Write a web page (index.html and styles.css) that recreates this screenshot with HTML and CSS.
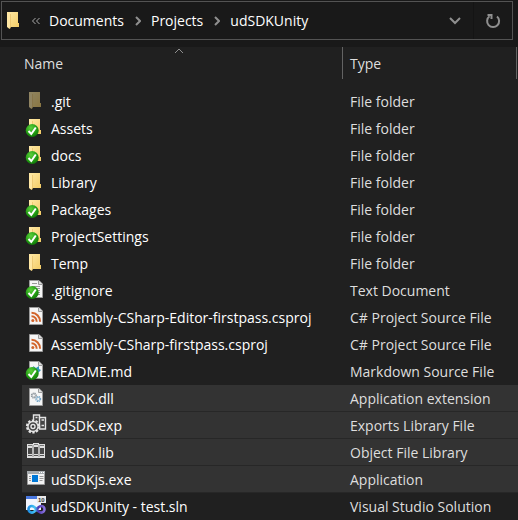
FILE: index.html
```html
<!DOCTYPE html>
<html lang="en">
<head>
<meta charset="utf-8">
<title>udSDKUnity</title>
<link rel="stylesheet" href="styles.css">
</head>
<body>
<svg class="defs" aria-hidden="true">
  <defs>
    <linearGradient id="gold" x1="0" y1="0" x2="1" y2="1"><stop offset="0" stop-color="#ffe9a6"/><stop offset="1" stop-color="#f3cc66"/></linearGradient>
    <radialGradient id="green" cx=".4" cy=".3" r=".8"><stop offset="0" stop-color="#5cd03c"/><stop offset=".6" stop-color="#219b12"/><stop offset="1" stop-color="#0b6a06"/></radialGradient>
    <linearGradient id="loop" x1="0" y1="0" x2="1" y2="0"><stop offset="0" stop-color="#1f8fe4"/><stop offset=".4" stop-color="#45c6f5"/><stop offset=".6" stop-color="#4b35b0"/><stop offset="1" stop-color="#8a72de"/></linearGradient>
    <symbol id="folder" viewBox="0 0 24 24">
      <path d="M4 3h11v11h1v4H4z" fill="url(#gold)"/>
      <path d="M4 3.500l3.500 1.500V18.500L6.500 20 4 18z" fill="#ffe7a3"/>
      <path d="M7.500 5v13l-1 2" fill="none" stroke="#e3b75a" stroke-width=".6"/>
    </symbol>
    <symbol id="check" viewBox="0 0 24 24">
      <circle cx="7.200" cy="14.500" r="6.500" fill="url(#green)"/>
      <path d="M3.500 15l2.800 3 4.500-6.500" fill="none" stroke="#fff" stroke-width="2"/>
    </symbol>
    <symbol id="page" viewBox="0 0 24 24">
      <path d="M4.500 2.500h9.500l3.500 3.500v13.500h-13z" fill="#f5f5f5" stroke="#9b9b9b"/>
      <path d="M13.500 2.500v4h4" fill="#ddd" stroke="#9b9b9b"/>
    </symbol>
    <symbol id="text" viewBox="0 0 24 24">
      <use href="#page"/>
      <path d="M7 5.500h5M7 8.500h8M7 10.500h8M7 12.500h8M7 14.500h8M7 16.500h8" stroke="#999"/>
    </symbol>
    <symbol id="feed" viewBox="0 0 24 24">
      <use href="#page"/>
      <circle cx="7.800" cy="15.500" r="1.500" fill="#d2642b"/>
      <path d="M6.500 11.200a5.300 5.300 0 0 1 5.200 5.600M6.500 7.800a8.700 8.700 0 0 1 8.600 9" fill="none" stroke="#d2642b" stroke-width="2"/>
    </symbol>
    <symbol id="markdown" viewBox="0 0 24 24">
      <use href="#page"/>
      <path d="M8 7l3 2 3-2v3l2 1-3 3v2h-3z" fill="#3294b5"/>
    </symbol>
    <symbol id="gears" viewBox="0 0 24 24">
      <use href="#page"/>
      <circle cx="8.800" cy="9.500" r="2.400" fill="none" stroke="#8a9299" stroke-width="1.200" stroke-dasharray="1.200 .6"/>
      <circle cx="8.800" cy="9.500" r="1.600" fill="#f5f5f5" stroke="#8a9299" stroke-width=".7"/>
      <circle cx="13.200" cy="13" r="2.400" fill="none" stroke="#72a4c6" stroke-width="1.200" stroke-dasharray="1.200 .6"/>
      <circle cx="13.200" cy="13" r="1.600" fill="#f5f5f5" stroke="#72a4c6" stroke-width=".7"/>
    </symbol>
    <symbol id="exports" viewBox="0 0 24 24">
      <path d="M8.500 2h6v2.500h6V16h-6V13h-6z" fill="#444" stroke="#e4e4e4" stroke-width="1.400"/>
      <path d="M14.500 4v11M10.500 4.500h2M16.500 7h2.500M16.500 12.500h2.500" stroke="#e4e4e4" stroke-width="1.400"/>
      <circle cx="8" cy="13.500" r="6" fill="#333" stroke="#e4e4e4" stroke-width="2.200" stroke-dasharray="2.300 1.470"/>
      <circle cx="8" cy="13.500" r="5" fill="#444" stroke="#e4e4e4" stroke-width="1.300"/>
      <circle cx="8" cy="13.500" r="2" fill="#333" stroke="#e4e4e4" stroke-width="1.400"/>
    </symbol>
    <symbol id="library" viewBox="0 0 24 24">
      <path d="M2 4h6V3h6v1h6v14H2z" fill="#dedede"/>
      <path d="M3 5h4v1H3zM9 4h4v1H9zM15 5h4v1h-4z" fill="#777"/>
      <path d="M3 8h4v6H3zM9 7h4v7H9zM15 8h4v6h-4z" fill="#484848"/>
      <path d="M3 15.500h4M9 15.500h4M15 15.500h4" stroke="#555"/>
      <path d="M8 5v12M14 5v12" stroke="#8a8a8a"/>
    </symbol>
    <symbol id="program" viewBox="0 0 24 24">
      <path d="M2.500 4.500h17v13h-17z" fill="#f3f3f3" stroke="#9c9c9c"/>
      <path d="M2 4h18v3H2z" fill="#a5aaae"/>
      <path d="M14 5.500h1M16 5.500h1M18 5.500h1" stroke="#fff"/>
      <path d="M7 8h6v7H7z" fill="#0078d7"/>
      <path d="M4 9.500h2M4 11.500h2M4 13.500h2M14.500 9.500h4M14.500 11.500h4M14.500 13.500h3" stroke="#999"/>
    </symbol>
    <symbol id="solution" viewBox="0 0 24 24">
      <path d="M1 2h15v14H1z" fill="#f1f4fd"/>
      <path d="M1 2h12v3H1z" fill="#4a78df"/>
      <path d="M12 2h9v7h-9z" fill="#e9e9e9"/>
      <text x="13" y="8" class="version">10</text>
      <path d="M11.500 15.300C9.500 12.600 8.500 12 6.800 12a3.300 3.300 0 0 0 0 6.600c3.800 0 5.600-6.600 9.400-6.600a3.300 3.300 0 0 1 0 6.600c-1.700 0-2.700-.6-4.700-3.300z" fill="none" stroke="url(#loop)" stroke-width="2.600"/>
    </symbol>
  </defs>
</svg>

<header class="toolbar">
  <nav class="address" aria-label="Address">
    <svg class="icon" aria-hidden="true"><use href="#folder"/></svg>
    <svg class="back" viewBox="0 0 10 8" aria-hidden="true"><path d="M4.500 1l-3 3 3 3M8.500 1l-3 3 3 3"/></svg>
    <a href="#documents">Documents</a>
    <svg class="step" viewBox="0 0 6 10" aria-hidden="true"><path d="M1 1l4 4-4 4"/></svg>
    <a href="#projects">Projects</a>
    <svg class="step" viewBox="0 0 6 10" aria-hidden="true"><path d="M1 1l4 4-4 4"/></svg>
    <a href="#udsdkunity">udSDKUnity</a>
    <button class="history" type="button" aria-label="Previous locations"><svg viewBox="0 0 12 8"><path d="M1 1l5 5 5-5"/></svg></button>
    <button class="refresh" type="button" aria-label="Refresh"><svg viewBox="0 0 16 16"><path d="M12 3.500a6 6 0 1 1-7.500-.2M2.500 2h4v4"/></svg></button>
  </nav>
</header>

<main class="files">
  <table>
    <colgroup><col class="name-col"><col></colgroup>
    <thead>
      <tr>
        <th scope="col" aria-sort="ascending">Name<svg class="sort" viewBox="0 0 10 6" aria-hidden="true"><path d="M1 5l4-4 4 4"/></svg></th>
        <th scope="col" class="type-head">Type</th>
      </tr>
    </thead>
    <tbody>
      <tr><td><div class="file"><svg class="icon hidden-item"><use href="#folder"/></svg>.git</div></td><td>File folder</td></tr>
      <tr><td><div class="file"><svg class="icon"><use href="#folder"/><use href="#check"/></svg>Assets</div></td><td>File folder</td></tr>
      <tr><td><div class="file"><svg class="icon"><use href="#folder"/><use href="#check"/></svg>docs</div></td><td>File folder</td></tr>
      <tr><td><div class="file"><svg class="icon"><use href="#folder"/></svg>Library</div></td><td>File folder</td></tr>
      <tr><td><div class="file"><svg class="icon"><use href="#folder"/><use href="#check"/></svg>Packages</div></td><td>File folder</td></tr>
      <tr><td><div class="file"><svg class="icon"><use href="#folder"/><use href="#check"/></svg>ProjectSettings</div></td><td>File folder</td></tr>
      <tr><td><div class="file"><svg class="icon"><use href="#folder"/></svg>Temp</div></td><td>File folder</td></tr>
      <tr><td><div class="file"><svg class="icon"><use href="#text"/><use href="#check"/></svg>.gitignore</div></td><td>Text Document</td></tr>
      <tr><td><div class="file"><svg class="icon"><use href="#feed"/></svg>Assembly-CSharp-Editor-firstpass.csproj</div></td><td>C# Project Source File</td></tr>
      <tr><td><div class="file"><svg class="icon"><use href="#feed"/></svg>Assembly-CSharp-firstpass.csproj</div></td><td>C# Project Source File</td></tr>
      <tr><td><div class="file"><svg class="icon"><use href="#markdown"/><use href="#check"/></svg>README.md</div></td><td>Markdown Source File</td></tr>
      <tr class="selected"><td><div class="file"><svg class="icon"><use href="#gears"/></svg>udSDK.dll</div></td><td>Application extension</td></tr>
      <tr class="selected"><td><div class="file"><svg class="icon"><use href="#exports"/></svg>udSDK.exp</div></td><td>Exports Library File</td></tr>
      <tr class="selected"><td><div class="file"><svg class="icon"><use href="#library"/></svg>udSDK.lib</div></td><td>Object File Library</td></tr>
      <tr class="selected"><td><div class="file"><svg class="icon"><use href="#program"/></svg>udSDKjs.exe</div></td><td>Application</td></tr>
      <tr><td><div class="file"><svg class="icon"><use href="#solution"/></svg>udSDKUnity - test.sln</div></td><td>Visual Studio Solution</td></tr>
    </tbody>
  </table>
</main>
</body>
</html>
```
FILE: styles.css
```css
* { box-sizing: border-box; }

body {
  margin: 0;
  background: #202020;
  color: #fff;
  font: 14px/20px "Open Sans", "Noto Sans", sans-serif;
}

.defs { position: absolute; width: 0; height: 0; }

.icon { flex: none; width: 24px; height: 24px; }
.hidden-item { opacity: .5; }
.version { fill: #333; font: bold 6px "Liberation Sans", sans-serif; }

.toolbar { padding: 1px 5px 7px 1px; background: #191919; }

.address {
  display: flex;
  align-items: center;
  height: 39px;
  padding-left: 1px;
  border: 1px solid #535353;
}

.address a { color: inherit; text-decoration: none; }

.back path,
.step path,
.address button path,
.sort path { fill: none; stroke: #8f8f8f; }

.address .back { width: 10px; height: 8px; margin: 0 8px 0 4px; }
.address .step { width: 6px; height: 10px; margin: 0 10px 0 11px; }
.back path { stroke: #aaa; }
.step path { stroke-width: 2; }

.address button {
  display: grid;
  place-items: center;
  height: 100%;
  padding: 0;
  border: 0;
  background: none;
}

.address .history { width: 36px; margin-left: auto; }
.address .refresh { width: 39px; border-left: 1px solid #141414; }
.history svg { width: 12px; height: 8px; }
.refresh svg { width: 16px; height: 16px; }
.address button path { stroke-width: 2; }

.files { padding-left: 22px; }

table {
  width: 100%;
  border-collapse: separate;
  border-spacing: 0;
  table-layout: fixed;
}

.name-col { width: 320px; }

th {
  position: relative;
  height: 32px;
  padding: 2px 2px 0;
  color: #dedede;
  font-weight: 400;
  text-align: left;
}

.type-head {
  padding-left: 7px;
  border-left: 1px solid #636363;
}

.type-head::after {
  content: "";
  position: absolute;
  top: 0;
  right: 1px;
  bottom: 0;
  border-right: 1px solid #636363;
}

.sort {
  position: absolute;
  top: 1px;
  left: 50%;
  width: 10px;
  height: 6px;
  margin-left: -8px;
}

tbody::before { content: ""; display: block; height: 9px; }

td {
  padding: 1px 0 0 8px;
  color: #dedede;
  line-height: 26px;
  white-space: nowrap;
}

td:first-child { padding-left: 3px; color: #fff; }

.file { display: flex; align-items: flex-start; gap: 2px; }

.selected td { background: #333; box-shadow: inset 0 -1px #272727; }
```
